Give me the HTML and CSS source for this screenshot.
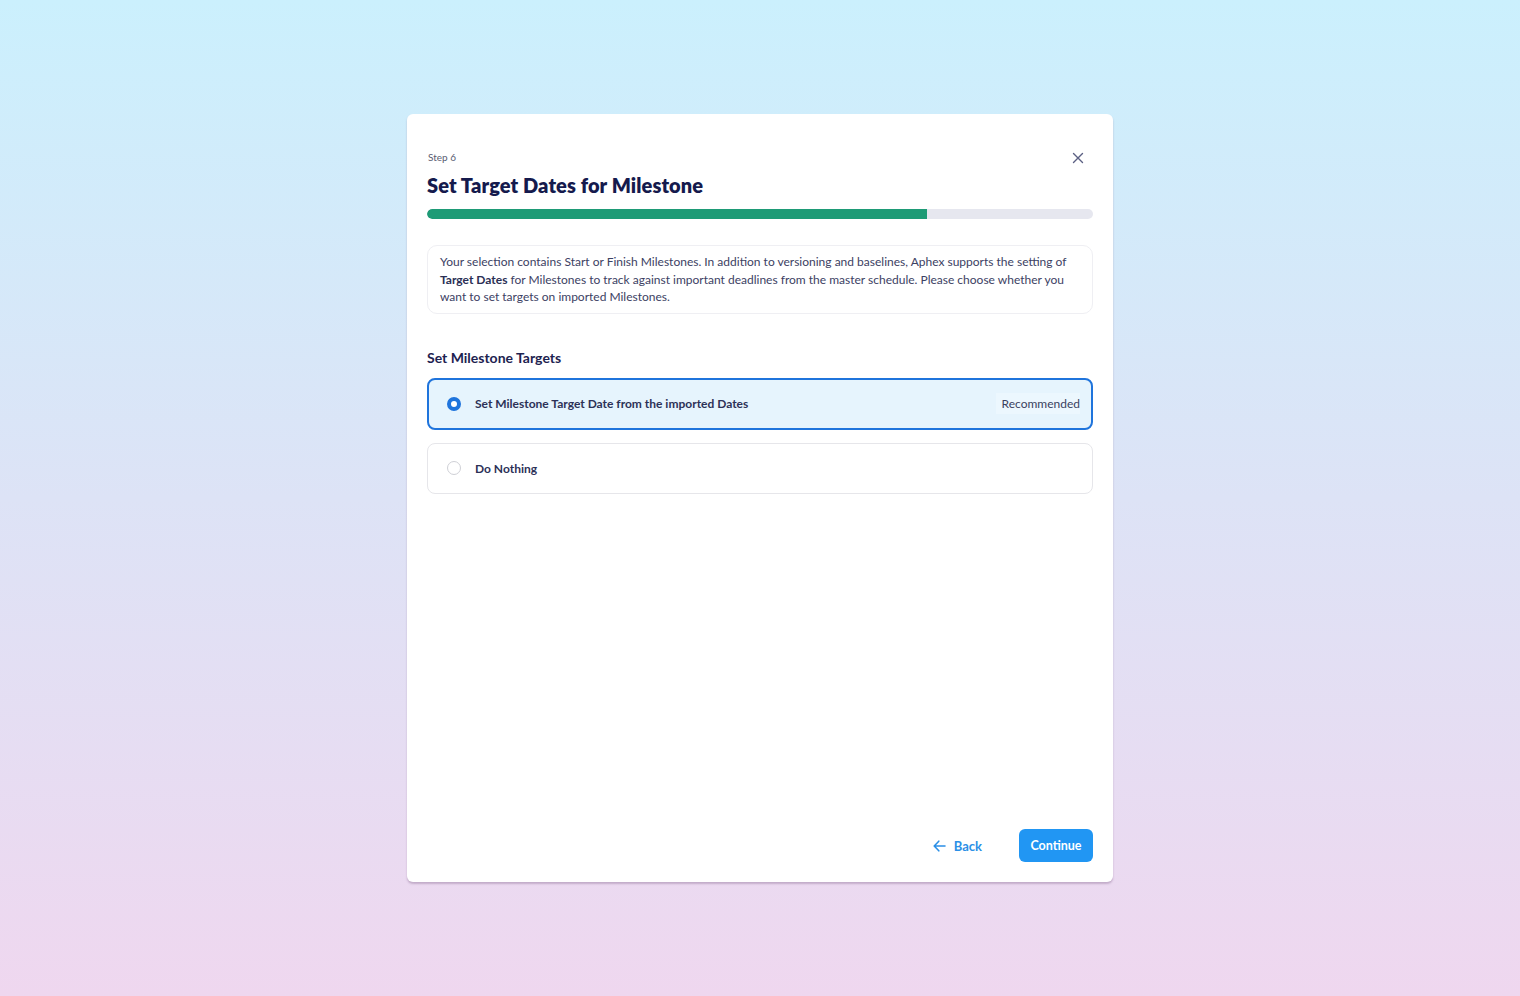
FILE: index.html
```html
<!DOCTYPE html>
<html lang="en">
<head>
<meta charset="utf-8">
<title>Set Target Dates for Milestone</title>
<link rel="stylesheet" href="styles.css">
</head>
<body>
<div class="stage">
  <div class="modal">
    <div class="head-row">
      <span class="step">Step 6</span>
      <button class="close" aria-label="Close">
        <svg width="12" height="12" viewBox="0 0 12 12"><path d="M1.5 1.5 L10.5 10.5 M10.5 1.5 L1.5 10.5" stroke="#5b6083" stroke-width="1.4" stroke-linecap="round" fill="none"/></svg>
      </button>
    </div>
    <h1 class="title">Set Target Dates for Milestone</h1>
    <div class="progress"><div class="progress-fill" style="width:75%"></div></div>
    <p class="info">Your selection contains Start or Finish Milestones. In addition to versioning and baselines, Aphex supports the setting of<br><b>Target Dates</b> for Milestones to track against important deadlines from the master schedule. Please choose whether you<br>want to set targets on imported Milestones.</p>
    <h2 class="section">Set Milestone Targets</h2>
    <div class="option selected">
      <span class="radio on"></span>
      <span class="opt-label">Set Milestone Target Date from the imported Dates</span>
      <span class="tag">Recommended</span>
    </div>
    <div class="option">
      <span class="radio"></span>
      <span class="opt-label">Do Nothing</span>
    </div>
    <div class="footer">
      <button class="back">
        <svg width="13" height="12" viewBox="0 0 13 12"><path d="M12 6 H1.5 M5.8 1.2 L1.2 6 L5.8 10.8" stroke="#2b8fe6" stroke-width="1.6" stroke-linecap="round" stroke-linejoin="round" fill="none"/></svg>
        <span>Back</span>
      </button>
      <button class="continue">Continue</button>
    </div>
  </div>
</div>
</body>
</html>
```
FILE: styles.css
```css
* { box-sizing: border-box; }
html, body { margin: 0; padding: 0; }
body {
  width: 1520px;
  height: 996px;
  overflow: hidden;
  font-family: "Lato", "Inter", "Liberation Sans", sans-serif;
  background: linear-gradient(180deg, #cbf0fd 0%, #dde3f6 50%, #efd7ef 100%);
}
.stage {
  height: 996px;
  display: flex;
  align-items: center;
  justify-content: center;
}
.modal {
  width: 706px;
  height: 768px;
  background: #fff;
  border-radius: 6px;
  box-shadow: 0 2px 2px rgba(120, 90, 130, 0.35);
  padding: 36px 20px 20px;
  display: flex;
  flex-direction: column;
}
.head-row {
  display: flex;
  justify-content: space-between;
  align-items: center;
  height: 14px;
}
.step {
  font-size: 10px;
  color: #5a5d72;
  line-height: 14px;
  padding-left: 1px;
}
.close {
  border: 0;
  background: none;
  padding: 0;
  width: 12px;
  height: 12px;
  margin-right: 9px;
  margin-top: 2px;
  display: flex;
}
.title {
  margin: 8px 0 0;
  font-size: 20px;
  line-height: 27px;
  font-weight: 800;
  color: #151a4d;
  letter-spacing: 0.1px;
}
.progress {
  margin-top: 10px;
  height: 10px;
  border-radius: 5px;
  background: #e6e7ef;
  overflow: hidden;
}
.progress-fill {
  height: 100%;
  background: #1e9b76;
  border-radius: 5px 0 0 5px;
}
.info {
  margin: 26px 0 0;
  border: 1px solid #efeff3;
  border-radius: 10px;
  padding: 7px 12px 7px;
  font-size: 12px;
  line-height: 17.5px;
  color: #3c4163;
}
.info b { font-weight: 700; color: #2a2f55; }
.section {
  margin: 34px 0 0;
  font-size: 14px;
  line-height: 20px;
  font-weight: 700;
  color: #1d2250;
}
.option {
  display: flex;
  align-items: center;
  height: 51px;
  border: 1px solid #e6e6ea;
  border-radius: 8px;
  padding: 0 12px 0 19px;
  margin-top: 13px;
}
.option.selected {
  margin-top: 10px;
  height: 52px;
  border: 2px solid #1f74dc;
  background: #e6f4fd;
  padding-left: 18px;
  padding-right: 11px;
}
.radio {
  width: 14px;
  height: 14px;
  border-radius: 50%;
  border: 1px solid #cfd0d6;
  background: #fff;
  flex: none;
}
.radio.on {
  border: 4.5px solid #1f74dc;
  background: #fff;
}
.opt-label {
  margin-left: 14px;
  font-size: 12px;
  font-weight: 700;
  color: #2c3157;
  flex: 1;
}
.tag {
  font-size: 12px;
  color: #3a3f5e;
  background: #ecf7fe;
  padding: 3px 0 3px 6px;
}
.footer {
  margin-top: auto;
  display: flex;
  justify-content: flex-end;
  align-items: center;
  gap: 37px;
}
.back {
  border: 0;
  background: none;
  display: flex;
  align-items: center;
  gap: 8px;
  padding: 0;
  font-family: inherit;
  font-size: 13px;
  font-weight: 700;
  color: #2b8fe6;
}
.continue {
  border: 0;
  height: 33px;
  width: 74px;
  border-radius: 6px;
  background: #2196f3;
  color: #fff;
  font-family: inherit;
  font-size: 12.5px;
  font-weight: 700;
}
```
